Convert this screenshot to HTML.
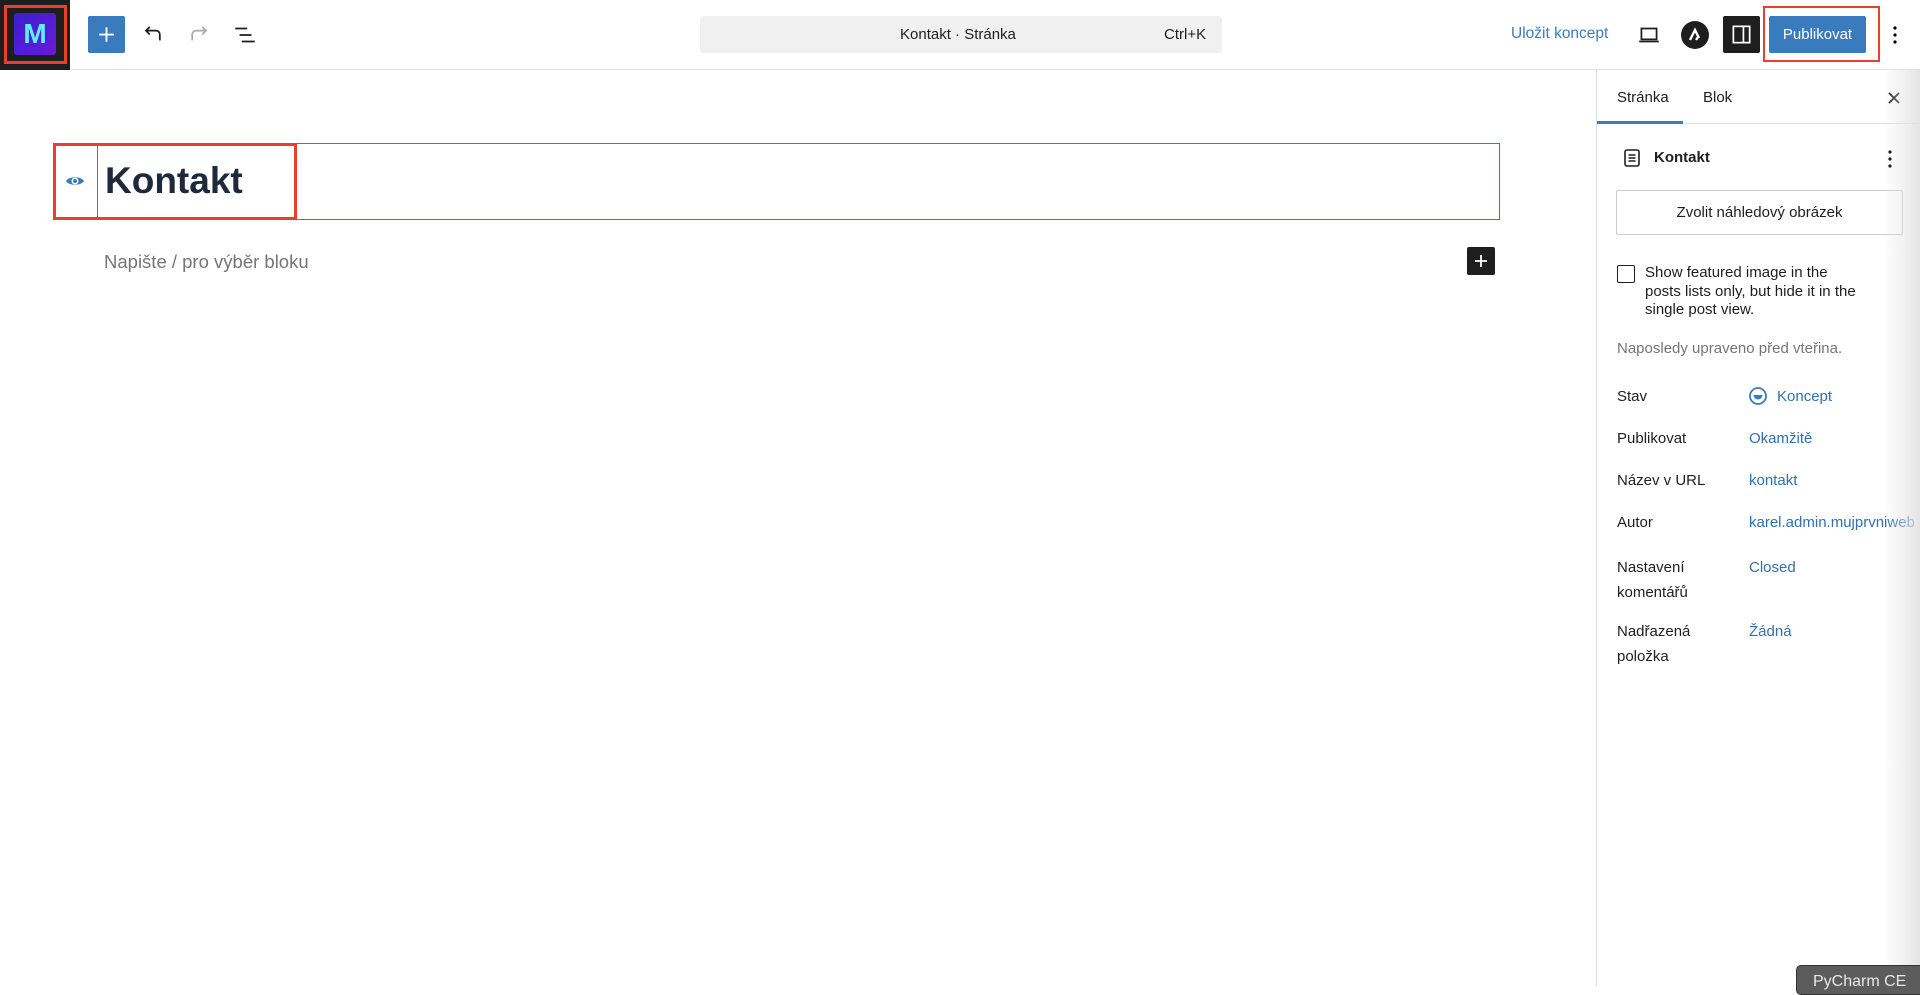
<!DOCTYPE html>
<html><head><meta charset="utf-8"><style>
*{box-sizing:border-box;margin:0;padding:0}
body{width:1920px;height:986px;overflow:hidden;background:#fff;font-family:"Liberation Sans",sans-serif;color:#1e1e1e;position:relative}
.a{position:absolute;white-space:nowrap}
.lbl{font-size:15px;color:#1e1e1e}
.val{font-size:15px;color:#3070b0}
</style></head><body>
<div class="a" style="left:0;top:0;width:1920px;height:70px;border-bottom:1px solid #e0e0e0"></div>
<div class="a" style="left:0;top:0;width:70px;height:70px;background:#1e1e1e"></div>
<div class="a" style="left:4px;top:5px;width:63px;height:59px;border:3px solid #e8402a"></div>
<div class="a" style="left:14px;top:13px;width:42px;height:42px;border-radius:3px;background:linear-gradient(135deg,#3b1fd0,#6a1ad8);color:#5ff0ff;font-weight:bold;font-size:28px;text-align:center;line-height:42px">M</div>
<div class="a" style="left:88px;top:16px;width:37px;height:37px;background:#3a7bbd;border-radius:2px"></div>
<svg class="a" style="left:94px;top:22px" width="25" height="25" viewBox="0 0 24 24"><path d="M12 5v14M5 12h14" stroke="#fff" stroke-width="1.8"/></svg>
<svg class="a" style="left:140px;top:22px" width="26" height="26" viewBox="0 0 24 24"><path d="M18.3 17V11.5a3.5 3.5 0 0 0-3.5-3.5H5.5M9 4.5L5.5 8 9 11.5" fill="none" stroke="#1e1e1e" stroke-width="1.6"/></svg>
<svg class="a" style="left:186px;top:22px" width="26" height="26" viewBox="0 0 24 24"><path d="M5.7 17V11.5A3.5 3.5 0 0 1 9.2 8h9.3M15 4.5L18.5 8 15 11.5" fill="none" stroke="#aaa" stroke-width="1.6"/></svg>
<svg class="a" style="left:232px;top:22px" width="26" height="26" viewBox="0 0 24 24"><path d="M3 6h11M7 12h11M9 18h12" stroke="#1e1e1e" stroke-width="1.6"/></svg>
<div class="a" style="left:700px;top:16px;width:522px;height:37px;background:#f0f0f0;border-radius:3px"></div>
<div class="a" style="left:900px;top:26px;font-size:15px;color:#1e1e1e">Kontakt · Stránka</div>
<div class="a" style="left:1164px;top:26px;font-size:15px;color:#1e1e1e">Ctrl+K</div>
<div class="a" style="left:1511px;top:25px;font-size:15.5px;color:#3a7bbd">Uložit koncept</div>
<svg class="a" style="left:1636px;top:22px" width="26" height="26" viewBox="0 0 24 24"><path d="M5 6h14v10H5zM3 18h18" fill="none" stroke="#1e1e1e" stroke-width="1.6"/></svg>
<div class="a" style="left:1681px;top:21px;width:28px;height:28px;border-radius:50%;background:#1e1e1e"></div>
<svg class="a" style="left:1685px;top:25px" width="20" height="20" viewBox="0 0 20 20"><path d="M5 15L10 5l4 8M11 15l2-3" fill="none" stroke="#fff" stroke-width="2.4"/></svg>
<div class="a" style="left:1723px;top:16px;width:37px;height:37px;background:#1e1e1e;border-radius:2px"></div>
<svg class="a" style="left:1730px;top:23px" width="23" height="23" viewBox="0 0 24 24"><rect x="3.5" y="3.5" width="17" height="17" fill="none" stroke="#fff" stroke-width="1.8"/><path d="M14 3.5v17" stroke="#fff" stroke-width="1.8"/></svg>
<div class="a" style="left:1763px;top:6px;width:117px;height:56px;border:2px solid #e8402a"></div>
<div class="a" style="left:1769px;top:16px;width:97px;height:37px;background:#3a7bbd;border-radius:2px;color:#fff;font-size:15px;text-align:center;line-height:37px">Publikovat</div>
<svg class="a" style="left:1883px;top:22px" width="24" height="26" viewBox="0 0 24 26"><circle cx="12" cy="6" r="1.6"/><circle cx="12" cy="13" r="1.6"/><circle cx="12" cy="20" r="1.6"/></svg>

<div class="a" style="left:97px;top:143px;width:1403px;height:77px;border:1px solid #3a7bbd"></div>
<div class="a" style="left:53px;top:143px;width:244px;height:77px;border:3px solid #e8402a"></div>
<svg class="a" style="left:65px;top:171px" width="20" height="20" viewBox="0 0 20 20"><path d="M1 10c3-5 15-5 18 0c-3 5-15 5-18 0z" fill="#3a7bbd"/><circle cx="10" cy="10" r="3.5" fill="#fff"/><circle cx="10" cy="10" r="2" fill="#3a7bbd"/></svg>
<div class="a" style="left:105px;top:160px;font-size:37px;font-weight:bold;color:#1e293b">Kontakt</div>
<div class="a" style="left:104px;top:251px;font-size:18.5px;color:#757575">Napište / pro výběr bloku</div>
<div class="a" style="left:1467px;top:247px;width:28px;height:28px;background:#1e1e1e;border-radius:2px"></div>
<svg class="a" style="left:1471px;top:251px" width="20" height="20" viewBox="0 0 20 20"><path d="M10 4v12M4 10h12" stroke="#fff" stroke-width="1.8"/></svg>

<div class="a" style="left:1596px;top:70px;width:1px;height:916px;background:#e0e0e0"></div>
<div class="a" style="left:1597px;top:123px;width:323px;height:1px;background:#e0e0e0"></div>
<div class="a" style="left:1597px;top:121px;width:86px;height:3px;background:#3a7bbd"></div>
<div class="a" style="left:1617px;top:89px;font-size:15px">Stránka</div>
<div class="a" style="left:1703px;top:89px;font-size:15px">Blok</div>
<svg class="a" style="left:1884px;top:88px" width="20" height="20" viewBox="0 0 20 20"><path d="M5 5l10 10M15 5L5 15" stroke="#1e1e1e" stroke-width="1.8"/></svg>
<svg class="a" style="left:1620px;top:146px" width="24" height="24" viewBox="0 0 24 24"><rect x="5" y="4" width="14" height="16" rx="2" fill="none" stroke="#1e1e1e" stroke-width="1.6"/><path d="M8.5 9h7M8.5 12h7M8.5 15h7" stroke="#1e1e1e" stroke-width="1.5"/></svg>
<div class="a" style="left:1654px;top:149px;font-size:15px;font-weight:bold">Kontakt</div>
<svg class="a" style="left:1878px;top:146px" width="24" height="26" viewBox="0 0 24 26"><circle cx="12" cy="6" r="1.6"/><circle cx="12" cy="13" r="1.6"/><circle cx="12" cy="20" r="1.6"/></svg>
<div class="a" style="left:1616px;top:190px;width:287px;height:45px;border:1px solid #ccc;border-radius:2px;text-align:center;line-height:43px;font-size:15px">Zvolit náhledový obrázek</div>
<div class="a" style="left:1617px;top:265px;width:18px;height:18px;border:1.5px solid #1e1e1e;border-radius:2px"></div>
<div class="a" style="left:1645px;top:264px;font-size:15px;line-height:18.5px;white-space:normal;width:218px">Show featured image in the posts lists only, but hide it in the single post view.</div>
<div class="a" style="left:1617px;top:340px;font-size:15px;color:#757575">Naposledy upraveno před vteřina.</div>
<div class="a lbl" style="left:1617px;top:388px">Stav</div>
<svg class="a" style="left:1748px;top:386px" width="20" height="20" viewBox="0 0 20 20"><circle cx="10" cy="10" r="8" fill="none" stroke="#3a7bbd" stroke-width="1.8"/><path d="M5.5 9h9a4.5 4.5 0 0 1-9 0z" fill="#3a7bbd"/></svg>
<div class="a val" style="left:1777px;top:388px">Koncept</div>
<div class="a lbl" style="left:1617px;top:430px">Publikovat</div>
<div class="a val" style="left:1749px;top:430px">Okamžitě</div>
<div class="a lbl" style="left:1617px;top:472px">Název v URL</div>
<div class="a val" style="left:1749px;top:472px">kontakt</div>
<div class="a lbl" style="left:1617px;top:514px">Autor</div>
<div class="a val" style="left:1749px;top:514px">karel.admin.mujprvniweb</div>
<div class="a lbl" style="left:1617px;top:555px;line-height:25px">Nastavení<br>komentářů</div>
<div class="a val" style="left:1749px;top:555px;line-height:25px">Closed</div>
<div class="a lbl" style="left:1617px;top:619px;line-height:25px">Nadřazená<br>položka</div>
<div class="a val" style="left:1749px;top:619px;line-height:25px">Žádná</div>
<div class="a" style="left:1885px;top:70px;width:35px;height:916px;background:linear-gradient(90deg,rgba(230,230,230,0),rgba(225,225,225,0.9))"></div>
<div class="a" style="left:1796px;top:965px;width:130px;height:30px;background:#5c5c5c;border:1px solid #333;border-radius:5px;color:#e8e8e8;font-size:16px;padding:7px 0 0 16px">PyCharm CE</div>
</body></html>
